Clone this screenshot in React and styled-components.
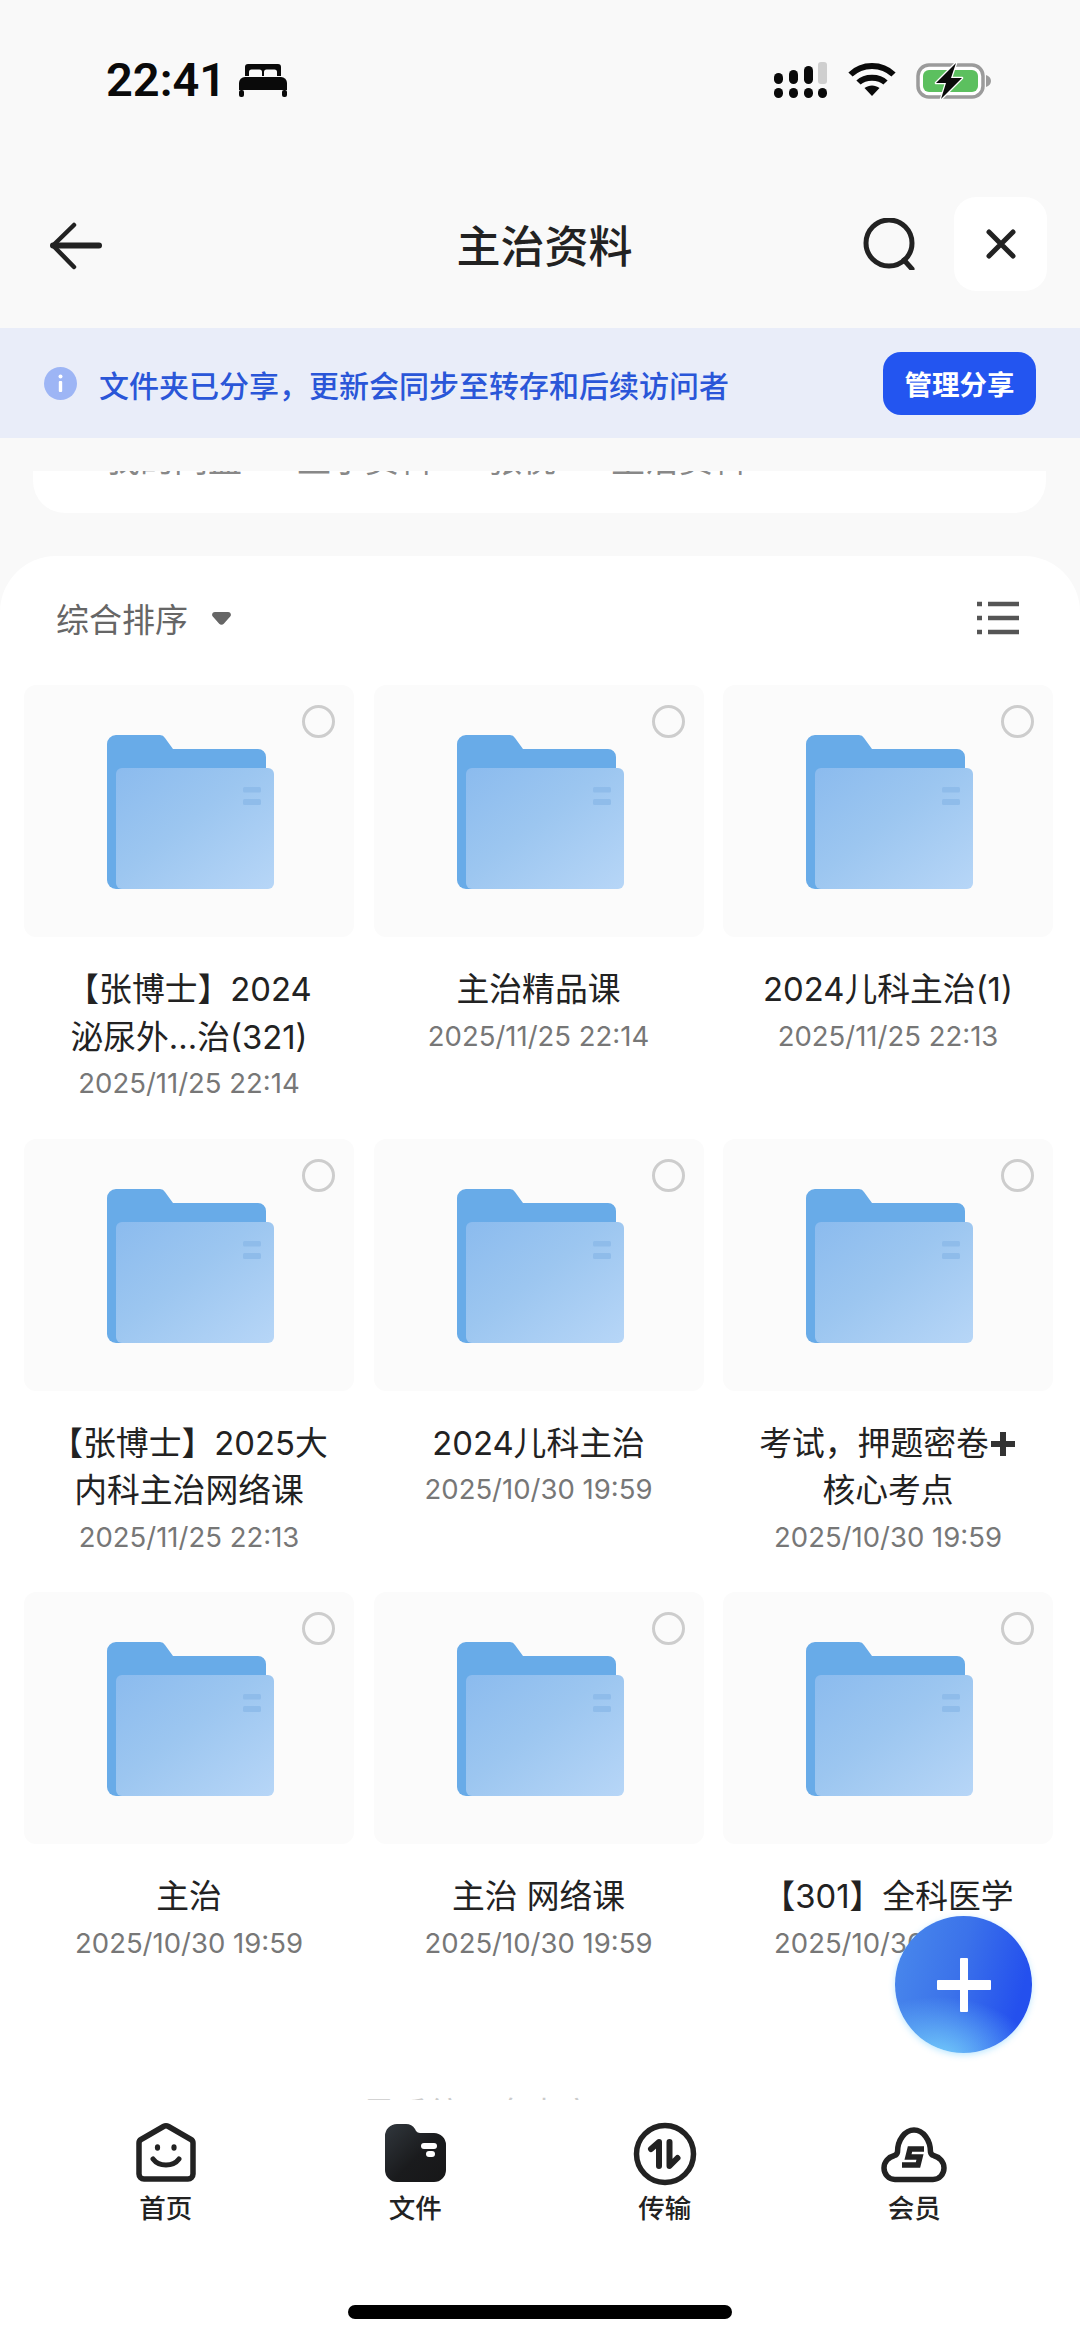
import React from "react";
import styled, { createGlobalStyle } from "styled-components";

const Global = createGlobalStyle`
  html, body { margin: 0; padding: 0; background: #f9f9f9; }
  * { box-sizing: border-box; }
`;

const FONT = `"Inter", "Noto Sans CJK SC", sans-serif`;

const Page = styled.div`
  position: relative;
  width: 1080px;
  height: 2341px;
  overflow: hidden;
  display: flex;
  flex-direction: column;
  background: #f9f9f9;
  font-family: ${FONT};
  color: #222;
`;

const StatusBar = styled.div`
  height: 160px;
  flex: none;
  display: flex;
  justify-content: space-between;
  align-items: flex-start;
  padding: 60px 88px 0 106px;
`;
const StatusLeft = styled.div`
  display: flex;
  align-items: center;
  gap: 13px;
`;
const Clock = styled.span`
  font-family: "Roboto", sans-serif;
  font-weight: 600;
  font-size: 47px;
  line-height: 40px;
  color: #0a0a0a;
`;
const StatusRight = styled.div`
  display: flex;
  align-items: flex-start;
  gap: 20px;
  padding-top: 2px;
  svg { display: block; }
`;

const Header = styled.header`
  height: 168px;
  flex: none;
  display: grid;
  grid-template-columns: 1fr auto 1fr;
  align-items: center;
  padding: 0 33px 0 50px;
`;
const BackSlot = styled.div`
  padding-top: 4px;
  svg { display: block; }
`;
const HeaderTitle = styled.h1`
  margin: 0 8px 0 0;
  font-size: 44px;
  font-weight: 500;
  color: #222;
`;
const HeaderRight = styled.div`
  display: flex;
  justify-content: flex-end;
  align-items: center;
  gap: 38px;
`;
const CloseButton = styled.div`
  width: 93px;
  height: 94px;
  border-radius: 22px;
  background: #fff;
  display: flex;
  align-items: center;
  justify-content: center;
`;

const Banner = styled.div`
  height: 110px;
  flex: none;
  background: #e9edf9;
  display: flex;
  align-items: center;
  padding: 0 44px;
  gap: 22px;
`;
const BannerInfo = styled.svg`
  flex: none;
  margin-top: 1px;
`;
const BannerText = styled.span`
  flex: 1;
  font-size: 30px;
  font-weight: 500;
  color: #2a56d8;
  white-space: nowrap;
  line-height: 1;
  padding-top: 6px;
`;
const BannerButton = styled.div`
  width: 153px;
  height: 63px;
  border-radius: 18px;
  background: #2355f0;
  color: #fff;
  font-size: 27.5px;
  font-weight: 700;
  display: flex;
  align-items: center;
  justify-content: center;
`;

const CrumbCard = styled.div`
  flex: none;
  height: 42px;
  margin: 33px 34px 0 33px;
  background: #fff;
  border-radius: 0 0 32px 32px;
  overflow: hidden;
  padding-left: 73px;
`;
const CrumbRow = styled.div`
  display: flex;
  gap: 55px;
  margin-top: -31px;
  font-size: 34px;
  line-height: 40px;
  color: #888;
`;

const Sheet = styled.section`
  flex: 1;
  min-height: 0;
  margin-top: 43px;
  background: #fff;
  border-radius: 56px 56px 0 0;
  overflow: hidden;
`;
const SortRow = styled.div`
  height: 129px;
  display: flex;
  align-items: center;
  justify-content: space-between;
  padding: 0 61px 5px 56px;
`;
const SortLabel = styled.div`
  display: flex;
  align-items: center;
  gap: 24px;
  font-size: 33px;
  color: #666;
  svg { display: block; }
`;
const Grid = styled.div`
  display: grid;
  grid-template-columns: repeat(3, 330px);
  grid-auto-rows: 453.5px;
  column-gap: 19.5px;
  padding-left: 24px;
`;
const Cell = styled.div`
  display: flex;
  flex-direction: column;
  align-items: center;
  text-align: center;
`;
const Thumb = styled.div`
  position: relative;
  width: 100%;
  height: 252px;
  flex: none;
  border-radius: 12px;
  background: #fbfbfb;
  display: flex;
  align-items: center;
  justify-content: center;
  padding: 3px 0 0 4px;
`;
const Radio = styled.span`
  position: absolute;
  top: 20px;
  right: 19px;
  width: 33px;
  height: 33px;
  border-radius: 50%;
  border: 3px solid #cdcdcd;
`;
const Name = styled.div`
  margin-top: 29px;
  font-size: 32.8px;
  line-height: 47.5px;
  color: #222;
  white-space: nowrap;
`;
const Stamp = styled.div`
  margin-top: 2px;
  font-size: 27.5px;
  line-height: 40px;
  color: #777;
  white-space: nowrap;
`;
const PlusMark = styled.svg`
  display: inline-block;
  width: 28px;
  height: 28px;
  vertical-align: -3px;
`;
const EndNote = styled.div`
  margin-top: 52px;
  text-align: center;
  padding-right: 124px;
  font-size: 33px;
  line-height: 32px;
  color: #ccc;
`;

const Fab = styled.div`
  position: absolute;
  left: 895px;
  top: 1916px;
  width: 137px;
  height: 137px;
  border-radius: 50%;
  display: flex;
  align-items: center;
  justify-content: center;
  background:
    radial-gradient(ellipse 70% 45% at 32% 104%, #74cdfb 0%, rgba(116, 205, 251, 0) 100%),
    linear-gradient(105deg, #4a8aec 0%, #3b72ea 45%, #2450ee 85%);
  box-shadow: 0 2px 6px rgba(110, 205, 255, 0.45);
`;

const TabBar = styled.nav`
  height: 205px;
  flex: none;
  background: #fff;
  display: grid;
  grid-template-columns: repeat(4, 249.5px);
  padding: 22px 0 0 41px;
  position: relative;
`;
const Tab = styled.div`
  display: flex;
  flex-direction: column;
  align-items: center;
  font-size: 26.5px;
  font-weight: 500;
  line-height: 34px;
  color: #222;
`;
const TabIcon = styled.div`
  height: 64px;
  margin-bottom: 5px;
  padding-top: ${(p) => p.$top || 0}px;
  display: flex;
  align-items: flex-start;
  justify-content: center;
  svg { display: block; }
`;
const HomeZone = styled.div`
  flex: none;
  height: 36px;
  background: #fff;
  display: flex;
  justify-content: center;
`;
const HomeBar = styled.div`
  width: 384px;
  height: 14px;
  border-radius: 7px;
  background: #000;
`;

const Bed = () => (
  <svg width="48" height="33" viewBox="0 0 48 33" fill="#0a0a0a">
    <path d="M6 3a3 3 0 0 1 3-3h30a3 3 0 0 1 3 3v9h-4V8a2.5 2.5 0 0 0-2.5-2.5h-8A2.5 2.5 0 0 0 25 8v4h-2V8a2.5 2.5 0 0 0-2.5-2.5h-8A2.5 2.5 0 0 0 10 8v4H6z" />
    <path d="M6 13h36a6 6 0 0 1 6 6v7H0v-7a6 6 0 0 1 6-6z" />
    <rect x="0" y="26" width="5" height="7" rx="2" />
    <rect x="43" y="26" width="5" height="7" rx="2" />
  </svg>
);

const Signal = () => (
  <svg width="54" height="36" viewBox="0 0 54 36">
    <g fill="#0a0a0a">
      <rect x="0" y="11" width="9" height="11" rx="4.5" />
      <rect x="15" y="8" width="9" height="14" rx="4.5" />
      <rect x="30" y="4" width="9" height="18" rx="4.5" />
      <rect x="0" y="26" width="9" height="10" rx="4.5" />
      <rect x="15" y="26" width="9" height="10" rx="4.5" />
      <rect x="30" y="26" width="9" height="10" rx="4.5" />
      <rect x="44" y="26" width="9" height="10" rx="4.5" />
    </g>
    <rect x="44" y="0" width="9" height="22" rx="3" fill="#cfcfcf" />
  </svg>
);

const Wifi = () => (
  <svg width="48" height="36" viewBox="0 0 48 36" fill="none" stroke="#0a0a0a" strokeWidth="6">
    <path d="M2.5 12.5C14 1 34 1 45.5 12.5" />
    <path d="M10.5 20.5C17 14 31 14 37.5 20.5" />
    <path d="M16.5 26L24 34l7.5-8C27 22.5 21 22.5 16.5 26z" fill="#0a0a0a" stroke="none" />
  </svg>
);

const Battery = () => (
  <svg width="76" height="38" viewBox="0 0 76 38">
    <rect x="2" y="3" width="65" height="32" rx="11" fill="#fff" stroke="#9b9b9b" strokeWidth="3.5" />
    <rect x="7" y="8" width="55" height="22" rx="6" fill="#5cc05f" />
    <path d="M70 13c3 1 5 3 5 6s-2 5-5 6z" fill="#9b9b9b" />
    <path d="M40 1L20 21h10l-5 16 21-21H35z" fill="#0a0a0a" stroke="#fff" strokeWidth="2.5" strokeLinejoin="round" paintOrder="stroke" />
  </svg>
);

const BackIcon = () => (
  <svg width="52" height="48" viewBox="0 0 52 48" fill="none" stroke="#222" strokeLinecap="round" strokeLinejoin="round">
    <path d="M24 3L3 23.5 24 45" strokeWidth="4.5" />
    <path d="M3 23.5h46" strokeWidth="6" />
  </svg>
);
const SearchIcon = () => (
  <svg width="54" height="52" viewBox="0 0 54 52" fill="none" stroke="#222" strokeWidth="5" strokeLinecap="round">
    <circle cx="27" cy="25" r="23" />
    <path d="M42 42l8 9" />
  </svg>
);
const CloseIcon = () => (
  <svg width="30" height="30" viewBox="0 0 30 30" fill="none" stroke="#222" strokeWidth="5" strokeLinecap="round">
    <path d="M3 3l24 24M27 3L3 27" />
  </svg>
);
const InfoIcon = () => (
  <BannerInfo width="33" height="33" viewBox="0 0 33 33">
    <circle cx="16.5" cy="16.5" r="16.5" fill="#9db5f5" />
    <rect x="14.8" y="14" width="3.4" height="11" rx="1" fill="#fff" />
    <circle cx="16.5" cy="9.5" r="2" fill="#fff" />
  </BannerInfo>
);
const Caret = () => (
  <svg width="19" height="13" viewBox="0 0 19 13" fill="#666">
    <path d="M3 0h13c2.6 0 3.8 2.6 2.2 4.6l-6.4 7.2c-1.2 1.4-3.4 1.4-4.6 0L.8 4.6C-.8 2.6.4 0 3 0z" />
  </svg>
);
const ListIcon = () => (
  <svg width="42" height="36" viewBox="0 0 42 36" fill="none" stroke="#555" strokeWidth="4.5">
    <path d="M0 4h5M0 18h5M0 32h5" />
    <path d="M11 4h31M11 18h31M11 32h31" />
  </svg>
);

const Folder = ({ id }) => (
  <svg width="168" height="155" viewBox="0 0 168 155">
    <defs>
      <linearGradient id={id} x1="0" y1="0" x2="1" y2="1">
        <stop offset="0" stopColor="#8bbbee" />
        <stop offset="0.45" stopColor="#9cc6f0" />
        <stop offset="1" stopColor="#b7d6f7" />
      </linearGradient>
    </defs>
    <path d="M0 9a9 9 0 0 1 9-9h44a6 6 0 0 1 5 3l8 11h85a8 8 0 0 1 8 8v110H9a9 9 0 0 1-9-9z" fill="#68abe8" />
    <path d="M0 120h20v34H9a9 9 0 0 1-9-9z" fill="#68abe8" />
    <rect x="9" y="33" width="158" height="121" rx="6" fill={`url(#${id})`} />
    <rect x="136" y="52" width="18" height="5.5" rx="1.5" fill="#8fbcea" />
    <rect x="136" y="64" width="18" height="6" rx="1.5" fill="#8fbcea" />
  </svg>
);

const FabPlus = () => (
  <svg width="54" height="54" viewBox="0 0 54 54" fill="#fff">
    <rect x="23" y="0" width="8" height="54" rx="1" />
    <rect x="0" y="22" width="54" height="10" rx="1" />
  </svg>
);

const HomeIcon = () => (
  <svg width="60" height="60" viewBox="0 0 60 60" fill="none" stroke="#222" strokeWidth="5.5" strokeLinejoin="round" strokeLinecap="round">
    <path d="M27.5 4.5a5 5 0 0 1 5 0L55 17.5a4 4 0 0 1 2 3.5V52a5 5 0 0 1-5 5H8a5 5 0 0 1-5-5V21a4 4 0 0 1 2-3.5z" />
    <ellipse cx="21.5" cy="25.5" rx="2.6" ry="3.2" fill="#222" stroke="none" />
    <ellipse cx="38" cy="25.5" rx="2.6" ry="3.2" fill="#222" stroke="none" />
    <path d="M17 37c6 8 20 8 26 0" strokeWidth="5" />
  </svg>
);
const FileIcon = () => (
  <svg width="61" height="58" viewBox="0 0 61 58">
    <defs>
      <linearGradient id="tabfile" x1="0" y1="0" x2="1" y2="1">
        <stop offset="0" stopColor="#31373d" />
        <stop offset="0.55" stopColor="#1a1b1d" />
        <stop offset="1" stopColor="#171718" />
      </linearGradient>
    </defs>
    <path d="M0 12A12 12 0 0 1 12 0h9a11 11 0 0 1 9 5l1 2a5 5 0 0 0 4 2h14a12 12 0 0 1 12 12v25a12 12 0 0 1-12 12H12A12 12 0 0 1 0 46z" fill="url(#tabfile)" />
    <rect x="36" y="19" width="16" height="6" rx="3" fill="#fff" />
    <rect x="41" y="27" width="9" height="6" rx="3" fill="#fff" />
  </svg>
);
const TransferIcon = () => (
  <svg width="64" height="64" viewBox="0 0 64 64" fill="none" stroke="#222" strokeLinecap="round" strokeLinejoin="round">
    <circle cx="32" cy="32" r="28.5" strokeWidth="5.5" />
    <path d="M26 44V20l-8 7" strokeWidth="6" />
    <path d="M36.5 20v24l8-8" strokeWidth="6" />
  </svg>
);
const VipIcon = () => (
  <svg width="66" height="56" viewBox="0 0 66 56" fill="none" stroke="#222" strokeWidth="5.5" strokeLinejoin="round">
    <path d="M14 52.5H52C58.5 52.5 63 47 63 41C63 35 58.5 30 52.5 28.5C51 28 50 27 49.5 25C49.5 13 42 3 33 3C24 3 16.5 13 16.5 25C16 27 15 28 13.5 28.5C7.5 30 3 35 3 41C3 47 7.5 52.5 14 52.5Z" />
    <path d="M43 22H29l-2 8h12l-2 8H21" strokeWidth="5.5" strokeLinejoin="miter" />
  </svg>
);

const files = [
  { lines: ["【张博士】2024", "泌尿外...治(321)"], date: "2025/11/25 22:14" },
  { lines: ["主治精品课"], date: "2025/11/25 22:14" },
  { lines: ["2024儿科主治(1)"], date: "2025/11/25 22:13" },
  { lines: ["【张博士】2025大", "内科主治网络课"], date: "2025/11/25 22:13" },
  { lines: ["2024儿科主治"], date: "2025/10/30 19:59" },
  { lines: ["考试\uFF0C押题密卷", "核心考点"], plus: true, date: "2025/10/30 19:59" },
  { lines: ["主治"], date: "2025/10/30 19:59" },
  { lines: ["主治 网络课"], date: "2025/10/30 19:59" },
  { lines: ["【301】全科医学"], date: "2025/10/30 19:59" },
];

const tabs = [
  { label: "首页", icon: <HomeIcon />, top: 0 },
  { label: "文件", icon: <FileIcon />, top: 2 },
  { label: "传输", icon: <TransferIcon />, top: 0 },
  { label: "会员", icon: <VipIcon />, top: 5 },
];

export default function App() {
  return (
    <Page>
      <Global />
      <StatusBar>
        <StatusLeft>
          <Clock>22:41</Clock>
          <Bed />
        </StatusLeft>
        <StatusRight>
          <Signal />
          <Wifi />
          <Battery />
        </StatusRight>
      </StatusBar>
      <Header>
        <BackSlot><BackIcon /></BackSlot>
        <HeaderTitle>主治资料</HeaderTitle>
        <HeaderRight>
          <SearchIcon />
          <CloseButton><CloseIcon /></CloseButton>
        </HeaderRight>
      </Header>
      <Banner>
        <InfoIcon />
        <BannerText>{"文件夹已分享\uFF0C更新会同步至转存和后续访问者"}</BannerText>
        <BannerButton>管理分享</BannerButton>
      </Banner>
      <CrumbCard>
        <CrumbRow>
          <span>我的网盘</span>
          <span>王子资料</span>
          <span>张悦</span>
          <span>主治资料</span>
        </CrumbRow>
      </CrumbCard>
      <Sheet>
        <SortRow>
          <SortLabel>综合排序<Caret /></SortLabel>
          <ListIcon />
        </SortRow>
        <Grid>
          {files.map((f, i) => (
            <Cell key={i}>
              <Thumb>
                <Folder id={`folder-${i}`} />
                <Radio />
              </Thumb>
              <Name>
                {f.lines.map((l, j) => (
                  <div key={j}>
                    {l}
                    {f.plus && j === 0 && (
                      <PlusMark viewBox="0 0 28 28" fill="#333">
                        <path d="M11 2h6v9h9v6h-9v9h-6v-9H2v-6h9z" />
                      </PlusMark>
                    )}
                  </div>
                ))}
              </Name>
              <Stamp>{f.date}</Stamp>
            </Cell>
          ))}
        </Grid>
        <EndNote>是系统网盘内容</EndNote>
      </Sheet>
      <TabBar>
        {tabs.map((t) => (
          <Tab key={t.label}>
            <TabIcon $top={t.top}>{t.icon}</TabIcon>
            {t.label}
          </Tab>
        ))}
      </TabBar>
      <HomeZone><HomeBar /></HomeZone>
      <Fab><FabPlus /></Fab>
    </Page>
  );
}
